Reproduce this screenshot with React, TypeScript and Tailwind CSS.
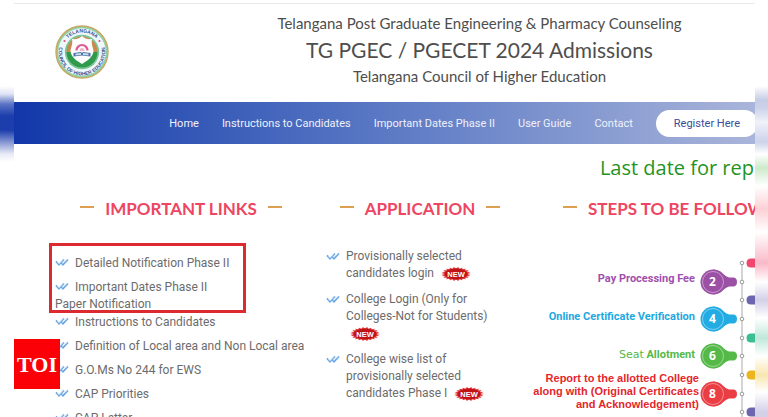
import { clsx } from "clsx";

const NAV_LINKS = [
    "Home",
    "Instructions to Candidates",
    "Important Dates Phase II",
    "User Guide",
    "Contact",
];

const BOXED_LINKS = [
    { label: "Detailed Notification Phase II" },
    { label: "Important Dates Phase II", extra: "Paper Notification" },
];

const LINKS = [
    "Instructions to Candidates",
    "Definition of Local area and Non Local area",
    "G.O.Ms No 244 for EWS",
    "CAP Priorities",
    "CAP Letter",
];

const APPLICATION_LINKS = [
    "Provisionally selected candidates login",
    "College Login (Only for Colleges-Not for Students)",
    "College wise list of provisionally selected candidates Phase I",
];

const STEPS = [
    { no: 2, y: 28, color: "#9b4fa5" },
    { no: 4, y: 65, color: "#22ace3" },
    { no: 6, y: 102, color: "#55b948" },
    { no: 8, y: 140, color: "#ea3e44" },
];

// right-hand (odd) steps, only their tips are in view
const TIPS = [
    { y: 9, color: "#f0476f" },
    { y: 46, color: "#6d65ae" },
    { y: 84, color: "#3dbd92" },
    { y: 121, color: "#eab51e" },
    { y: 158, color: "#6d65ae" },
];

const DoubleCheck = ({ className }: { className?: string }) => (
    <svg viewBox="0 0 14 9" className={clsx("inline-block h-[9px] w-[14px] shrink-0 align-baseline", className)} fill="none" aria-hidden="true">
        <path d="M1 3.4 L4 6.8 L9 1.4" stroke="#6ba6e4" strokeWidth="1.7" />
        <path d="M5.8 4.4 L8 6.8 L13 1.4" stroke="#6ba6e4" strokeWidth="1.7" />
        <path d="M2 4 L4.2 6 L8.6 1.4 M7 5.6 L12.4 1.4" stroke="#dcebfa" strokeWidth="0.6" />
    </svg>
);

const burst = Array.from({ length: 44 }, (_, i) => {
    const a = (i / 44) * Math.PI * 2;
    const k = i % 2 ? 0.8 : 1;
    return `${15 + Math.cos(a) * 15 * k},${7 + Math.sin(a) * 7 * k}`;
}).join(" ");

const NewBadge = () => (
    <svg viewBox="0 0 30 14" className="ml-[4px] inline-block h-[14px] w-[30px] align-middle" role="img" aria-label="New">
        <polygon points={burst} fill="#e0383a" />
        <ellipse cx="15" cy="7" rx="11.5" ry="5.4" fill="#c11216" />
        <text x="15" y="9.6" textAnchor="middle" fontSize="7.5" fontWeight="700" fill="#fff" fontFamily="Liberation Sans, sans-serif">
            NEW
        </text>
    </svg>
);

const CouncilLogo = () => (
    <svg viewBox="0 0 54 54" className="h-[54px] w-[54px] shrink-0" role="img" aria-label="Telangana Council of Higher Education">
        <defs>
            <path id="arc-top" d="M7.5 27 A19.5 19.5 0 0 1 46.5 27" />
            <path id="arc-bottom" d="M4.5 21.5 A23.2 23.2 0 1 0 49.5 21.5" />
        </defs>
        <circle cx="27" cy="27" r="26" fill="#8fd0a5" stroke="#c9a861" strokeWidth="1.4" />
        <circle cx="27" cy="27" r="23.8" fill="#eef8fb" />
        <circle cx="27" cy="27" r="17.2" fill="#7cc598" />
        <path d="M11.5 27 A15.5 15.5 0 0 1 42.5 27 Z" fill="#c98a4d" />
        <path d="M11.5 27 A15.5 15.5 0 0 0 42.5 27 Z" fill="#2f9a4c" />
        <path d="M27 11 C30 14 34 14.5 37 14 C36 19 38 22 38.5 26 C38 32 32 36 27 39 C22 36 16 32 15.5 26 C16 22 18 19 17 14 C20 14.5 24 14 27 11 Z" fill="#fdfdfd" />
        <path d="M21.5 25.5 A5.5 5.5 0 0 1 32.5 25.5" fill="none" stroke="#df5c93" strokeWidth="2.2" />
        <path d="M24.5 26 A2.5 3 0 0 1 29.5 26 Z" fill="#f0b4cc" />
        <path d="M18.5 28 L26 27 L27 28 L28 27 L35.5 28 L35.5 31.5 L27 30.5 L18.5 31.5 Z" fill="#4b71a6" />
        <path d="M20.5 28.5 L26 28 L26 30 L20.5 30.5 Z M28 28 L33.5 28.5 L33.5 30.5 L28 30 Z" fill="#c9dcee" />
        <circle cx="9.5" cy="16" r="1.1" fill="#e0527d" />
        <circle cx="44.5" cy="16" r="1.1" fill="#e0527d" />
        <g fill="#3c5192" fontFamily="Liberation Sans, sans-serif" fontWeight="700">
            <text fontSize="5" textAnchor="middle">
                <textPath href="#arc-top" startOffset="50%">TELANGANA</textPath>
            </text>
            <text fontSize="5" textAnchor="middle">
                <textPath href="#arc-bottom" startOffset="50%">COUNCIL OF HIGHER EDUCATION</textPath>
            </text>
        </g>
    </svg>
);

const SectionTitle = ({ children, align = "center" }: { children: string; align?: "center" | "start" }) => (
    <div className={clsx("flex items-center gap-[11px]", align === "center" && "justify-center")}>
        <span className="mb-1 h-[2px] w-[14px] shrink-0 bg-[#dda052]" />
        <h2 className="whitespace-nowrap font-[Lato,sans-serif] text-[17px] leading-[22px] font-bold text-[#ee4562]">{children}</h2>
        <span className="mb-1 h-[2px] w-[14px] shrink-0 bg-[#dda052]" />
    </div>
);

const Timeline = () => (
    <svg viewBox="0 0 56 166" className="h-[166px] w-[56px] shrink-0" aria-hidden="true">
        <path d="M43 9 V166" stroke="#aaa" strokeWidth="1" />
        {STEPS.map(({ no, y, color }) => (
            <g key={no} transform={`translate(0 ${y})`}>
                <path d="M14 -12.5 C25 -12 24 -4.5 32 -4.5 H34 Q38 -4.3 38 0 Q38 4.3 34 4.5 H32 C24 4.5 25 12 14 12.5 Z" fill={color} />
                <circle cx="14" cy="0" r="12.5" fill={color} />
                <circle cx="14" cy="0" r="10.5" fill="none" stroke="#fff" strokeOpacity="0.6" strokeWidth="0.7" />
                <text x="13.5" y="4" textAnchor="middle" fontSize="12" fontWeight="700" fill="#fff" fontFamily="Open Sans, sans-serif">
                    {no}
                </text>
                <circle cx="43" cy="0" r="1.8" fill="#fff" stroke="#999" />
            </g>
        ))}
        {TIPS.map(({ y, color }) => (
            <g key={y}>
                <circle cx="43" cy={y} r="1.8" fill="#fff" stroke="#999" />
                <path d={`M56 ${y - 4.5} H52 Q47.5 ${y - 4.5} 47.5 ${y} Q47.5 ${y + 4.5} 52 ${y + 4.5} H56 Z`} fill={color} />
            </g>
        ))}
    </svg>
);

export default function App() {
    return (
        <div className="flex h-screen overflow-hidden bg-white font-[Roboto,sans-serif] text-[12px] leading-[17px] text-[#6c6c6c]">
            {/* soft colour bands at the page edges */}
            <div className="w-[14px] shrink-0 bg-[linear-gradient(#fff_86px,#dfe3f4_94px,#5c74c4_104px,#1c3dac_116px,#1c3dac_130px,#8495d2_142px,#e8ebf7_154px,#fff_162px)]" />

            <div className="relative min-w-0 flex-1 overflow-hidden">
                <header className="mt-[3px] flex items-start border-t border-[#e9e9e9]">
                    <div className="w-[190px] shrink-0 pt-[21px] pl-[41px]">
                        <CouncilLogo />
                    </div>
                    <div className="flex-1 pt-[6px] pb-[13px] text-center font-[Lato,sans-serif] whitespace-nowrap text-[#4e4e4e] [font-variant-ligatures:none]">
                        <p className="text-[15px] leading-[26px]">Telangana Post Graduate Engineering &amp; Pharmacy Counseling</p>
                        <h1 className="text-[21px] leading-[27px]">TG PGEC / PGECET 2024 Admissions</h1>
                        <p className="text-[15px] leading-[26px]">Telangana Council of Higher Education</p>
                    </div>
                </header>

                <nav className="-mr-[3px] flex h-[42px] items-center justify-end gap-[23px] bg-linear-to-r from-[#1236a9] to-[#aab5da] text-[11px] whitespace-nowrap text-[#eef1fb]">
                    {NAV_LINKS.map((label) => (
                        <a key={label} href="#">{label}</a>
                    ))}
                    <button type="button" className="h-[27px] rounded-full bg-white px-[18px] text-[#3b4c9c]">Register Here</button>
                </nav>

                <p className="mt-[11px] pr-px text-right font-['Open_Sans',sans-serif] text-[20px] leading-[26px] text-[#1f9324]">Last date for rep</p>

                <main className="mt-[17px] grid grid-cols-[264fr_214fr_228fr] pl-[35px]">
                    <section className="min-w-0">
                        <SectionTitle>IMPORTANT LINKS</SectionTitle>
                        <div className="mt-[23px] h-[70px] w-[197px] border-[3px] border-[#dd2a30] pt-[9px] pl-[3px]">
                            <ul className="space-y-[7px] whitespace-nowrap">
                                {BOXED_LINKS.map(({ label, extra }) => (
                                    <li key={label}>
                                        <a href="#"><DoubleCheck className="mr-[6px]" />{label}</a>
                                        {extra && <a href="#" className="block">{extra}</a>}
                                    </li>
                                ))}
                            </ul>
                        </div>
                        <ul className="space-y-[7px] pt-px pl-[6px] whitespace-nowrap">
                            {LINKS.map((label) => (
                                <li key={label}><a href="#"><DoubleCheck className="mr-[6px]" />{label}</a></li>
                            ))}
                        </ul>
                    </section>

                    <section className="min-w-0">
                        <SectionTitle>APPLICATION</SectionTitle>
                        <ul className="mt-7 space-y-[9px] pr-[30px] pl-[13px]">
                            {APPLICATION_LINKS.map((label) => (
                                <li key={label} className="flex gap-[6px]">
                                    <DoubleCheck className="mt-1" />
                                    <a href="#">{label} <NewBadge /></a>
                                </li>
                            ))}
                        </ul>
                    </section>

                    <section className="min-w-0">
                        <div className="pl-[36px]">
                            <SectionTitle align="start">STEPS TO BE FOLLOWED</SectionTitle>
                        </div>
                        <div className="mt-[34px] flex justify-end">
                            <ol className="pt-4 text-right text-[11px] font-bold whitespace-nowrap">
                                <li className="h-[38px] pr-1 text-[#a14fae]">Pay Processing Fee</li>
                                <li className="h-[38px] pr-1 text-[#1fa8e0]">Online Certificate Verification</li>
                                <li className="h-[26px] pr-1 text-[#55b948]">
                                    <span className="font-['DejaVu_Sans',sans-serif] font-normal">Seat</span> Allotment
                                </li>
                                <li className="font-['Liberation_Sans',sans-serif] leading-[13px] text-[#e5262b]">
                                    Report to the allotted College<br />along with (Original Certificates<br />and Acknowledgement)
                                </li>
                            </ol>
                            <Timeline />
                        </div>
                    </section>
                </main>

                <div className="absolute top-[339px] left-0 flex h-[50px] w-[46px] items-center justify-center bg-[#fb0006] font-['Liberation_Serif',serif] text-[22px] font-bold text-white">
                    TOI
                </div>
            </div>

            <div className="w-[13px] shrink-0 bg-[linear-gradient(#fff_86px,#c5cce5_100px,#ccd2e8_108px,#f0f2f9_122px,#ccd3ea_142px,#fff_154px,#cdeacb_168px,#fff_186px,#fcd0d6_209px,#fff_232px,#f9b9c8_263px,#fff_282px,#d3d0e8_300px,#fff_318px,#bfe8da_338px,#fff_356px,#f8e6b0_375px,#fff_392px,#d3d0e8_412px)]" />
        </div>
    );
}
